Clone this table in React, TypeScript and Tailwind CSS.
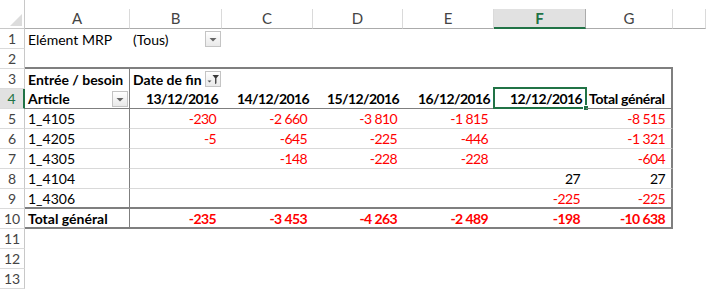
import * as React from "react"
import clsx from "clsx"

const letters = ["A", "B", "C", "D", "E", "F", "G", ""]
const dates = ["13/12/2016", "14/12/2016", "15/12/2016", "16/12/2016", "12/12/2016"]

const articles = [
  ["1_4105", "-230", "-2 660", "-3 810", "-1 815", "", "-8 515"],
  ["1_4205", "-5", "-645", "-225", "-446", "", "-1 321"],
  ["1_4305", "", "-148", "-228", "-228", "", "-604"],
  ["1_4104", "", "", "", "", "27", "27"],
  ["1_4306", "", "", "", "", "-225", "-225"],
]
const totals = ["-235", "-3 453", "-4 263", "-2 489", "-198", "-10 638"]

function DropButton({ filter }: { filter?: boolean }) {
  return (
    <span className="flex h-[16px] w-[16px] shrink-0 items-center justify-center border border-[#c4c4c4] bg-linear-to-b from-white to-[#e9e9e9]">
      {filter ? (
        <svg width="14" height="14" viewBox="0 0 14 14">
          <path d="M1.5 8.5h4l-2 2z" fill="#555" />
          <path d="M6.5 3h6.5l-2.6 3.2v5l-1.3 1v-6z" fill="#3a3a3a" />
        </svg>
      ) : (
        <svg width="14" height="14" viewBox="0 0 14 14">
          <path d="M3.5 6h7l-3.5 3.5z" fill="#666" />
        </svg>
      )}
    </span>
  )
}

function Cell({ className, children }: { className?: string; children?: React.ReactNode }) {
  return (
    <div className={clsx("relative flex h-[20px] min-w-0 items-center whitespace-nowrap px-[3px]", className)}>
      {children}
    </div>
  )
}

function RowHead({ n }: { n: number }) {
  return (
    <div
      className={clsx(
        "flex h-[20px] items-center justify-center border-b border-[#dadada] text-[14px]",
        n === 4
          ? "border-r-2 border-r-[#217346] bg-[#e1e1e1] text-[#217346]"
          : "border-r border-r-[#c8c8c8] text-[#444]"
      )}
    >
      {n}
    </div>
  )
}

// numbers get a bit of negative tracking, Lato digits are wider than Calibri's
const num = (v: string) => clsx("tracking-[-0.6px]", v.startsWith("-") ? "text-[#ff0000]" : "text-black")

export default function App() {
  return (
    <div className="h-[291px] w-[706px] overflow-hidden bg-white font-['Lato',sans-serif] text-[14px] text-black">
      <div className="grid grid-cols-[25px_105px_92px_91px_90px_91px_92px_87px_1fr]">
        {/* column headers */}
        <div className="flex h-[29px] items-end justify-end border-b border-r border-[#c8c8c8] pb-[2px] pr-[2px]">
          <svg width="12" height="12" viewBox="0 0 12 12">
            <path d="M12 0v12h-12z" fill="#dcdcdc" />
          </svg>
        </div>
        {letters.map((l, i) => (
          <div key={i} className="flex h-[29px] flex-col justify-end">
            <div
              className={clsx(
                "flex h-[20px] items-center justify-center border-r text-[15px]",
                l === "F"
                  ? "border-b-2 border-b-[#217346] border-r-[#ababab] bg-[#e1e1e1] font-bold text-[#217346]"
                  : "border-b border-b-[#ababab] border-r-[#dadada] text-[#444]"
              )}
            >
              {l}
            </div>
          </div>
        ))}

        {/* 1 */}
        <RowHead n={1} />
        <Cell>Elément MRP</Cell>
        <Cell className="justify-between pr-[1px]">
          <span>(Tous)</span>
          <DropButton />
        </Cell>
        <Cell /><Cell /><Cell /><Cell /><Cell /><Cell />

        {/* 2 */}
        <RowHead n={2} />
        {[0, 1, 2, 3, 4, 5, 6].map((i) => (
          <Cell key={i} className="border-b-2 border-[#7f7f7f]" />
        ))}
        <Cell />

        {/* 3 */}
        <RowHead n={3} />
        <Cell className="border-r border-[#7f7f7f] font-bold">Entrée / besoin</Cell>
        <Cell className="justify-between pr-[1px] font-bold">
          <span>Date de fin</span>
          <DropButton filter />
        </Cell>
        <Cell /><Cell /><Cell /><Cell />
        <Cell className="border-r-2 border-[#7f7f7f]" />
        <Cell />

        {/* 4 */}
        <RowHead n={4} />
        <Cell className="justify-between border-b border-r border-[#7f7f7f] pr-[1px] font-bold">
          <span>Article</span>
          <DropButton />
        </Cell>
        {dates.map((d, i) => (
          <Cell key={d} className="justify-end border-b border-[#7f7f7f] pr-[4px] font-bold tracking-[-0.6px]">
            {d}
            {i === 4 && (
              <>
                <span className="absolute -bottom-[1px] -left-[1px] -right-[1px] -top-[2px] border-2 border-[#217346]" />
                <span className="absolute -bottom-[3px] -right-[3px] h-[6px] w-[6px] border border-white bg-[#217346]" />
              </>
            )}
          </Cell>
        ))}
        <Cell className="border-b border-r-2 border-[#7f7f7f] font-bold tracking-[-0.3px]">Total général</Cell>
        <Cell />

        {/* 5 - 9 */}
        {articles.map((row, r) => (
          <React.Fragment key={row[0]}>
            <RowHead n={r + 5} />
            {row.map((v, c) => (
              <Cell
                key={c}
                className={clsx(
                  r === 4 ? "border-b-2 border-b-[#7f7f7f]" : "border-b border-b-[#d9d9d9]",
                  c === 0 && "border-r border-r-[#7f7f7f]",
                  c === 6 && "border-r-2 border-r-[#7f7f7f]",
                  c > 0 && "justify-end pr-[6px]",
                  c > 0 && num(v)
                )}
              >
                {v}
              </Cell>
            ))}
            <Cell />
          </React.Fragment>
        ))}

        {/* 10 */}
        <RowHead n={10} />
        <Cell className="border-b-2 border-r border-[#7f7f7f] font-bold">Total général</Cell>
        {totals.map((v, c) => (
          <Cell
            key={c}
            className={clsx(
              "justify-end border-b-2 border-b-[#7f7f7f] pr-[6px] font-bold",
              num(v),
              c === 5 && "border-r-2 border-r-[#7f7f7f]"
            )}
          >
            {v}
          </Cell>
        ))}
        <Cell />

        {/* 11 - 13 */}
        {[11, 12, 13].map((n) => (
          <React.Fragment key={n}>
            <RowHead n={n} />
            <Cell /><Cell /><Cell /><Cell /><Cell /><Cell /><Cell /><Cell />
          </React.Fragment>
        ))}
      </div>
    </div>
  )
}
